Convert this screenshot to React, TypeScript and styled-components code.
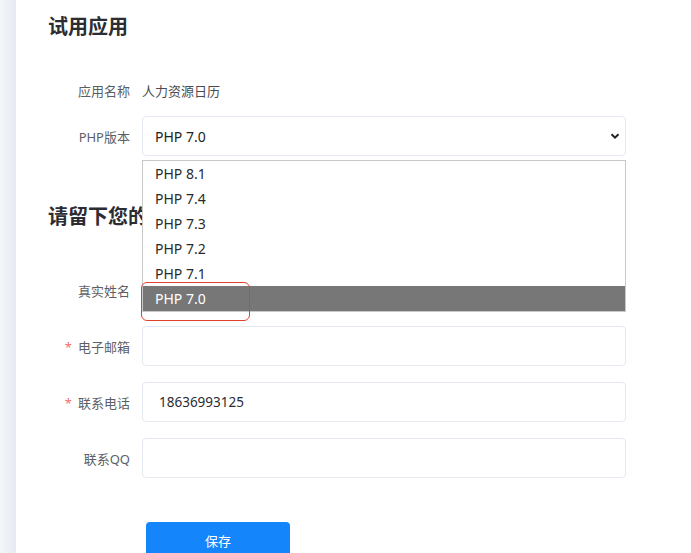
import styled, { createGlobalStyle } from 'styled-components';

const GlobalStyle = createGlobalStyle`
  html, body {
    margin: 0;
    padding: 0;
    background: #ffffff;
    font-family: "Noto Sans", "Noto Sans CJK SC", sans-serif;
  }
  * {
    box-sizing: border-box;
  }
`;

const Page = styled.div`
  display: flex;
  width: 691px;
  height: 553px;
  overflow: hidden;
`;

const SideStrip = styled.div`
  width: 16px;
  flex-shrink: 0;
  background: linear-gradient(to right, #f4f6fa, #e6eaf1);
`;

const Main = styled.div`
  flex: 1;
  padding: 14px 0 0 32px;
  background: #ffffff;
`;

const SectionTitle = styled.h2<{ $top: number }>`
  margin: ${(p) => p.$top}px 0 0;
  height: 26px;
  font-size: 20px;
  line-height: 26px;
  font-weight: 700;
  color: #2b2d33;
`;

const Form = styled.div<{ $top: number }>`
  display: flex;
  flex-direction: column;
  gap: 16px;
  width: 578px;
  margin-top: ${(p) => p.$top}px;
`;

const Row = styled.div<{ $gapAfter?: number }>`
  display: flex;
  align-items: center;
  height: 40px;
  margin-bottom: ${(p) => (p.$gapAfter !== undefined ? p.$gapAfter - 16 : 0)}px;
`;

const Label = styled.div`
  width: 94px;
  flex-shrink: 0;
  padding-right: 12px;
  text-align: right;
  font-size: 13px;
  color: #5c5f66;
`;

const Star = styled.span`
  color: #f56c6c;
  margin-right: 6px;
`;

const Value = styled.div`
  font-size: 13px;
  color: #4a4c52;
`;

const FieldWrap = styled.div`
  position: relative;
  flex: 1;
  height: 40px;
`;

const Input = styled.input`
  width: 100%;
  height: 40px;
  padding: 0 16px;
  border: 1px solid #e4e8f1;
  border-radius: 4px;
  font-family: "Noto Sans", "Noto Sans CJK SC", sans-serif;
  font-size: 13.5px;
  color: #2b2d33;
  outline: none;
  background: #ffffff;
`;

const SelectBox = styled.div`
  display: flex;
  align-items: center;
  justify-content: space-between;
  height: 40px;
  padding: 0 4px 0 12px;
  border: 1px solid #e4e8f1;
  border-radius: 4px;
  font-size: 14px;
  color: #222222;
`;

const Chevron = styled.svg`
  width: 12px;
  height: 12px;
`;

const OptionList = styled.div`
  position: absolute;
  top: 44px;
  left: 0;
  right: 0;
  z-index: 5;
  border: 1px solid #c9c9c9;
  background: #ffffff;
`;

const Option = styled.div<{ $active?: boolean }>`
  height: 25px;
  line-height: 25px;
  padding-left: 12px;
  font-size: 14px;
  color: ${(p) => (p.$active ? '#ffffff' : '#2a2a2a')};
  background: ${(p) => (p.$active ? '#777777' : 'transparent')};
`;

const Marker = styled.div`
  position: absolute;
  left: -2px;
  bottom: -10px;
  width: 109px;
  height: 39px;
  border: 1px solid #e2402c;
  border-radius: 6px;
  pointer-events: none;
`;

const Actions = styled.div`
  padding: 44px 0 0 98px;
`;

const SaveButton = styled.button`
  width: 144px;
  height: 36px;
  border: none;
  border-radius: 4px;
  background: #1485fb;
  color: #ffffff;
  font-family: "Noto Sans", "Noto Sans CJK SC", sans-serif;
  font-size: 13px;
  cursor: pointer;
`;

const versions = ['PHP 8.1', 'PHP 7.4', 'PHP 7.3', 'PHP 7.2', 'PHP 7.1', 'PHP 7.0'];

export default function App() {
  return (
    <>
      <GlobalStyle />
      <Page>
        <SideStrip />
        <Main>
          <SectionTitle $top={0}>试用应用</SectionTitle>
          <Form $top={30}>
            <Row $gapAfter={6}>
              <Label>应用名称</Label>
              <Value>人力资源日历</Value>
            </Row>
            <Row>
              <Label>PHP版本</Label>
              <FieldWrap>
                <SelectBox>
                  <span>PHP 7.0</span>
                  <Chevron viewBox="0 0 12 12">
                    <path d="M2.5 4.2 L6 7.7 L9.5 4.2" fill="none" stroke="#222" strokeWidth="2" />
                  </Chevron>
                </SelectBox>
                <OptionList>
                  {versions.map((v) => (
                    <Option key={v} $active={v === 'PHP 7.0'}>
                      {v}
                    </Option>
                  ))}
                  <Marker />
                </OptionList>
              </FieldWrap>
            </Row>
          </Form>
          <SectionTitle $top={48}>请留下您的联系方式</SectionTitle>
          <Form $top={40}>
            <Row>
              <Label>真实姓名</Label>
              <FieldWrap>
                <Input />
              </FieldWrap>
            </Row>
            <Row>
              <Label>
                <Star>*</Star>电子邮箱
              </Label>
              <FieldWrap>
                <Input />
              </FieldWrap>
            </Row>
            <Row>
              <Label>
                <Star>*</Star>联系电话
              </Label>
              <FieldWrap>
                <Input defaultValue="18636993125" />
              </FieldWrap>
            </Row>
            <Row>
              <Label>联系QQ</Label>
              <FieldWrap>
                <Input />
              </FieldWrap>
            </Row>
          </Form>
          <Actions>
            <SaveButton>保存</SaveButton>
          </Actions>
        </Main>
      </Page>
    </>
  );
}
